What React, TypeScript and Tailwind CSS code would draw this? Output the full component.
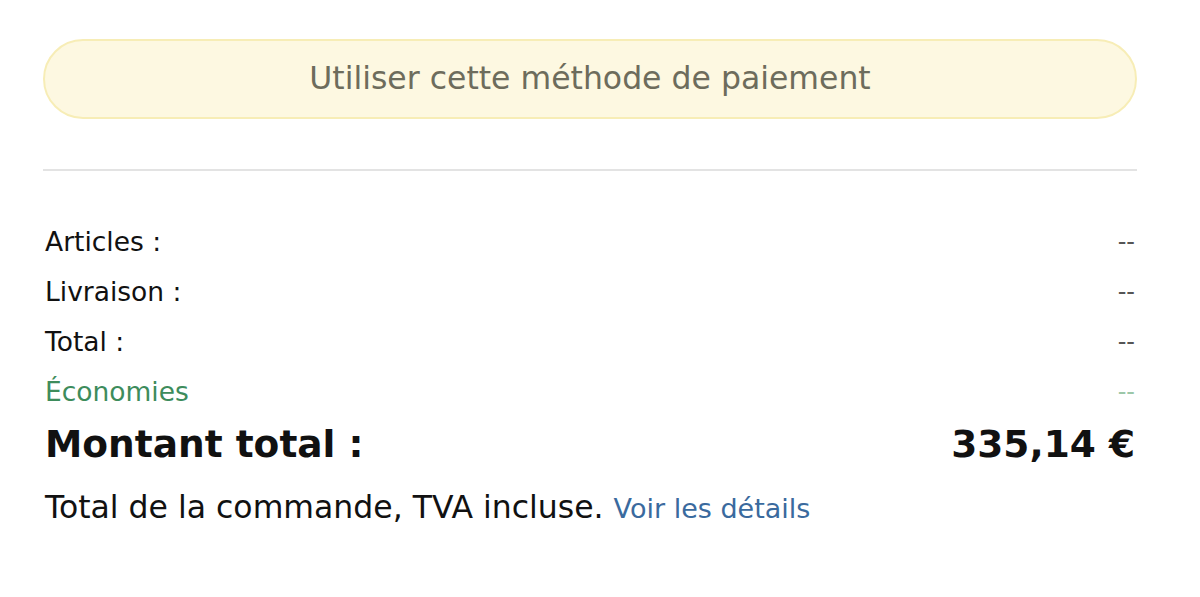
import React from "react";

const font = { fontFamily: '"DejaVu Sans", "Open Sans", Arial, sans-serif' };

function Row({ label, value, green }: { label: string; value: string; green?: boolean }) {
  return (
    <div className={`flex justify-between items-center h-[50px] text-[26.5px] ${green ? "text-[#3d8c5c]" : "text-[#111]"}`}>
      <span>{label}</span>
      <span className={`text-[24px] ${green ? "text-[#9cc7a8]" : "text-[#555]"}`}>{value}</span>
    </div>
  );
}

export default function App() {
  return (
    <div className="w-[1200px] h-[597px] bg-white overflow-hidden" style={font}>
      <div className="pl-[43px] pr-[63px] pt-[39px]">
        <div className="h-[80px] rounded-full bg-[#fdf8e1] border-2 border-[#f7edb6] flex items-center justify-center text-[31.5px] text-[#6d6c5c]">
          Utiliser cette méthode de paiement
        </div>
        <div className="mt-[50px] h-[2px] bg-[#e3e3e3]" />
        <div className="mt-[46px] pl-[2px] pr-[2px]">
          <Row label="Articles :" value="--" />
          <Row label="Livraison :" value="--" />
          <Row label="Total :" value="--" />
          <Row label="Économies" value="--" green />
          <div className="flex justify-between items-center h-[54px] text-[37.5px] font-bold text-[#111]">
            <span>Montant total :</span>
            <span>335,14 €</span>
          </div>
          <div className="mt-[16px] text-[31.5px] text-[#111] leading-[40px]">
            Total de la commande, TVA incluse.{" "}
            <span className="text-[27px] text-[#3a6a9e]">Voir les détails</span>
          </div>
        </div>
      </div>
    </div>
  );
}
